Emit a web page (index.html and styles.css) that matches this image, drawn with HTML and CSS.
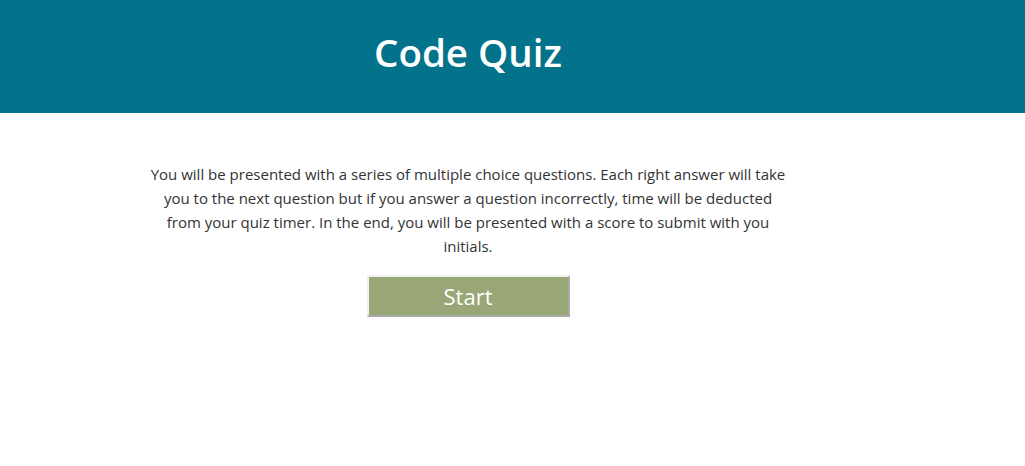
FILE: index.html
```html
<!DOCTYPE html>
<html>
<head>
<meta charset="utf-8">
<link rel="stylesheet" href="styles.css">
<title>Code Quiz</title>
</head>
<body>
<header class="top">
  <div class="wrap">
    <h1 class="title">Code Quiz</h1>
  </div>
</header>
<main class="wrap intro">
  <p class="rules">You will be presented with a series of multiple choice questions. Each right answer will take you to the next question but if you answer a question incorrectly, time will be deducted from your quiz timer. In the end, you will be presented with a score to submit with you initials.</p>
  <button class="start">Start</button>
</main>
</body>
</html>
```
FILE: styles.css
```css
html, body {
  margin: 0;
  padding: 0;
  background: #ffffff;
  font-family: "Open Sans", "Noto Sans", sans-serif;
}
.top {
  background: #03738b;
  height: 113px;
}
.wrap {
  width: 936px;
  display: flex;
  flex-direction: column;
  align-items: center;
}
.title {
  margin: 0;
  padding-top: 27px;
  color: #ffffff;
  font-size: 38.5px;
  font-weight: 600;
  line-height: 50px;
}
.intro {
  padding-top: 49px;
}
.rules {
  margin: 0;
  width: 641px;
  text-align: center;
  font-size: 15px;
  line-height: 24px;
  color: #333333;
}
.start {
  margin-top: 17px;
  width: 203px;
  height: 42px;
  background: #98a775;
  color: #ffffff;
  font-family: inherit;
  font-size: 22px;
  border: 2px solid #a9a9a9;
  border-top-color: #f0f0f0;
  border-left-color: #f0f0f0;
  padding: 0;
}
```
